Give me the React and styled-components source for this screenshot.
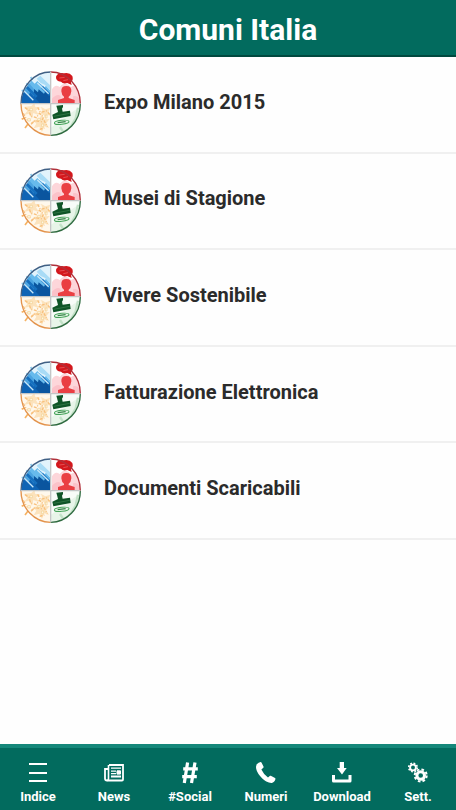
import React from "react";
import styled, { createGlobalStyle } from "styled-components";

const GlobalStyle = createGlobalStyle`
  * { box-sizing: border-box; }
  body { margin: 0; background: #fefefe; font-family: Roboto, "Liberation Sans", sans-serif; }
`;

const Screen = styled.div`
  min-height: 100vh;
  display: flex;
  flex-direction: column;
`;

const Header = styled.header`
  height: 57px;
  flex: none;
  display: flex;
  align-items: center;
  justify-content: center;
  padding-top: 4px;
  background: #026b5e;
  border-bottom: 2px solid #01493f;
`;

const Title = styled.h1`
  margin: 0;
  color: #fff;
  font-size: 30px;
  line-height: 38px;
  font-weight: 700;
`;

const Main = styled.main`
  flex: 1;
`;

const List = styled.ul`
  margin: 0;
  padding: 0;
  list-style: none;
  display: grid;
  grid-auto-rows: 1fr;
  min-height: 483px;
`;

const Item = styled.li`
  display: flex;
  border-bottom: 2px solid #f0f0f0;
`;

const ItemLink = styled.a`
  flex: 1;
  display: flex;
  align-items: center;
  gap: 22px;
  padding: 0 20px;
  color: #2b2b2b;
  font-size: 20px;
  line-height: 24px;
  font-weight: 700;
  text-decoration: none;
`;

const ItemLabel = styled.span`
  padding-bottom: 5px;
`;

const LogoSvg = styled.svg`
  width: 62px;
  height: 68px;
  flex: none;
`;

const TabBar = styled.nav`
  height: 66px;
  flex: none;
  display: flex;
  background: #026b5e;
  border-top: 4px solid #15877a;
`;

const Tab = styled.button`
  flex: 1 1 0;
  min-width: 0;
  display: flex;
  flex-direction: column;
  align-items: center;
  gap: 4px;
  padding: 13px 0 0;
  border: 0;
  background: none;
  color: #fff;
  font-family: inherit;
  font-size: 13px;
  line-height: 16px;
  font-weight: 700;
  cursor: pointer;
`;

const TabIcon = styled.svg`
  width: 24px;
  height: 24px;
  flex: none;
  fill: currentColor;
`;

const Logo = () => (
  <LogoSvg viewBox="30 33 186 204" preserveAspectRatio="none" aria-hidden="true">
    <defs>
      <clipPath id="disc"><ellipse cx="122" cy="134" rx="88" ry="94" /></clipPath>
    </defs>
    <g clipPath="url(#disc)">
      <path d="M30 36h92v98H30z" fill="#e2f3fc" />
      <path d="M34 88l10-4 10 6-2-14 14-6 18 16 4-14 14 12 20 20v30H34z" fill="#4ba3e0" />
      <path d="M62 62l12 12 8-8 20 22 6-8 14 16v12L96 104 80 100 60 76z" fill="#67baec" />
      <path d="M91 50l31 30v14l-18-17-12-5-12-13z" fill="#a8dbf6" />
      <path d="M72 90l12 10 2-9 16 13 4-7 16 12v25H80l-8-20z" fill="#0a559f" />
      <path d="M34 104l12-6 10 12 4-10 26 28 4 6H34z" fill="#0f64b5" />
      <path d="M50 84l30 30M96 84l24 24" stroke="#1670bf" strokeWidth="8" />
      <path d="M40 94l30 30M82 72l34 32" stroke="#c5e6f8" strokeWidth="4" />
      <path d="M123 36h90v98h-90z" fill="#fff" />
      <path d="M126 91q9-17 23-7 15-21 34 0 15-9 31 5v45h-88z" fill="#fdd6da" />
      <path d="M126 134v-15q15-16 25-9l3 24zM189 112q14-5 24 12v10h-22z" fill="#fbc2c9" />
      <path d="M122 134H34q0 94 88 94z" fill="#fff8ec" />
      <path d="M42 144l10 12-10 12 15-4 9 16 4-18 17 7-9-15 15-8-18-3-1-12-10 10zM69 183l10 11-8 14 17-5 8 16 7-17 14 5-8-15 10-12-17 1-8-14-6 14zM93 143l4 14-10 7 15 4 3 13 8-13 11 3-8-13 5-12-15 5z" fill="#fce3bd" />
      <path d="M45 146l12 8 5 17 17 5 9-13 13 11-7 14-18-3-13 11M83 145l8 15 19-4 9 10M64 193l12-8M102 184l10 20M89 211l14-4M40 163l11 20" fill="none" stroke="#f8c07c" strokeWidth="4" strokeDasharray="9 4 3 5" />
      <path d="M60 148h7v7h-7zM83 178h8v6h-8zM106 168h5v9h-5zM53 179h8v7h-8zM95 195h6v8h-6z" fill="#fffbed" stroke="#f3cf8c" strokeWidth="2" />
      <path d="M122 134h91v95h-91z" fill="#f8fcf8" />
      <path d="M123 206l68-50 20-13-2 25-37 59-47 2z" fill="#e8f5e9" />
      <path d="M204 146l-7 32-27 46M150 204l12 18 30-28" fill="none" stroke="#c3e2c8" strokeWidth="7" />
    </g>
    <path d="M54 78l-5-5M67 63l-5-9M43 97l-8-3" stroke="#8ccaee" strokeWidth="5" />
    <path d="M54 195l-9 12M43 177l-8 4" stroke="#f6b363" strokeWidth="5" />
    <path d="M138 53q6-14 24-10 16-4 25 8 4 12-4 18l2 9-13-6q-13 4-19-4-16-2-15-15z" fill="#d3181d" />
    <path d="M148 57l16-2M160 65l14-3" stroke="#ee6a6c" strokeWidth="2" />
    <path d="M154 97q-1-16 15-16t15 16q-1 12-8 16v4l18 6v10h-50v-10l18-6v-4q-7-4-8-16z" fill="#ea3f43" />
    <path d="M139 140l20-2v6l-3 5 2 9 22-3 2 16-52 10-3-14 17-8-3-12z" fill="#0f5527" />
    <path d="M131 172l48-9" stroke="#3d8250" strokeWidth="2" />
    <ellipse cx="155" cy="190" rx="22" ry="6" transform="rotate(-6 155 190)" fill="#e8f6e8" stroke="#47a45b" strokeWidth="3" />
    <path d="M143 191l24-3" stroke="#338445" strokeWidth="4" />
    <path d="M122 39A89 95 0 0 0 33 134" fill="none" stroke="#3f5f84" strokeWidth="4" />
    <path d="M122 39A89 95 0 0 1 211 134" fill="none" stroke="#b0303a" strokeWidth="4" />
    <path d="M33 134A89 95 0 0 0 122 229" fill="none" stroke="#e3934c" strokeWidth="4" />
    <path d="M122 229A89 95 0 0 0 211 134" fill="none" stroke="#2f6b40" strokeWidth="4" />
    <path d="M122 39v190M33 134h178" stroke="#c4c6c6" strokeWidth="4" />
  </LogoSvg>
);

const glyphs = {
  menu: <path d="M3 2h18v2H3zM3 11h18v2H3zM3 19h18v2H3z" />,
  news: (
    <>
      <path d="M7 4h14v14.5q0 1-1 1H5q-2 0-2-2V8h3" fill="none" stroke="currentColor" strokeWidth="1.8" />
      <path d="M6.5 4v13.5q0 2-1.5 2" fill="none" stroke="currentColor" strokeWidth="1.6" />
      <path d="M9 6.5h10v1.3H9zM9 9.5h5v1.2H9zM9 12h5v1.2H9zM9 14.5h10v2H9z" />
      <path d="M15 9.8h3.5v3.3H15z" fill="currentColor" stroke="currentColor" strokeWidth="1" />
    </>
  ),
  hash: <path d="M9.6 1.5L6.3 22M17 1.5L13.5 22M5.2 7.8h14.6M4.2 15.7h14.6" fill="none" stroke="currentColor" strokeWidth="3.2" />,
  phone: <path d="M4.7 1.8 6.5 1.1Q7.1 1 7.5 1.5L9.6 5.7Q9.8 6.3 9.3 6.8L7.4 8.5Q9.5 13.2 14 16.6L15.7 14.9Q16.2 14.5 16.8 14.8L21 17Q21.7 17.5 21.4 18.2 20.4 21.6 17.7 21.9C11.8 22.3 2 13.1 2 5.7Q2 3 4.7 1.8Z" />,
  download: <path d="M9.7 1h4.3v6h2.7L12 13.5 7 7h2.7zM2 14h3v4.5h13.5V14h3v6q0 1.5-1.5 1.5H3.5Q2 21.5 2 20z" />,
  gears: (
    <g fill="none" stroke="currentColor">
      <circle cx="7" cy="6.5" r="2.9" strokeWidth="1.9" />
      <circle cx="7" cy="6.5" r="4.3" strokeWidth="1.6" strokeDasharray="1.8 1.577" />
      <circle cx="14.7" cy="14.5" r="3.8" strokeWidth="3" />
      <circle cx="14.7" cy="14.5" r="6" strokeWidth="2" strokeDasharray="2.6 2.112" />
    </g>
  ),
};

const items = [
  "Expo Milano 2015",
  "Musei di Stagione",
  "Vivere Sostenibile",
  "Fatturazione Elettronica",
  "Documenti Scaricabili",
];

const tabs = [
  ["menu", "Indice"],
  ["news", "News"],
  ["hash", "#Social"],
  ["phone", "Numeri"],
  ["download", "Download"],
  ["gears", "Sett."],
];

export default function App() {
  return (
    <Screen>
      <GlobalStyle />
      <Header><Title>Comuni Italia</Title></Header>
      <Main>
        <List>
          {items.map((label) => (
            <Item key={label}>
              <ItemLink href="#">
                <Logo />
                <ItemLabel>{label}</ItemLabel>
              </ItemLink>
            </Item>
          ))}
        </List>
      </Main>
      <TabBar>
        {tabs.map(([icon, label]) => (
          <Tab key={icon} type="button">
            <TabIcon viewBox="0 0 24 24" aria-hidden="true">{glyphs[icon]}</TabIcon>
            {label}
          </Tab>
        ))}
      </TabBar>
    </Screen>
  );
}
